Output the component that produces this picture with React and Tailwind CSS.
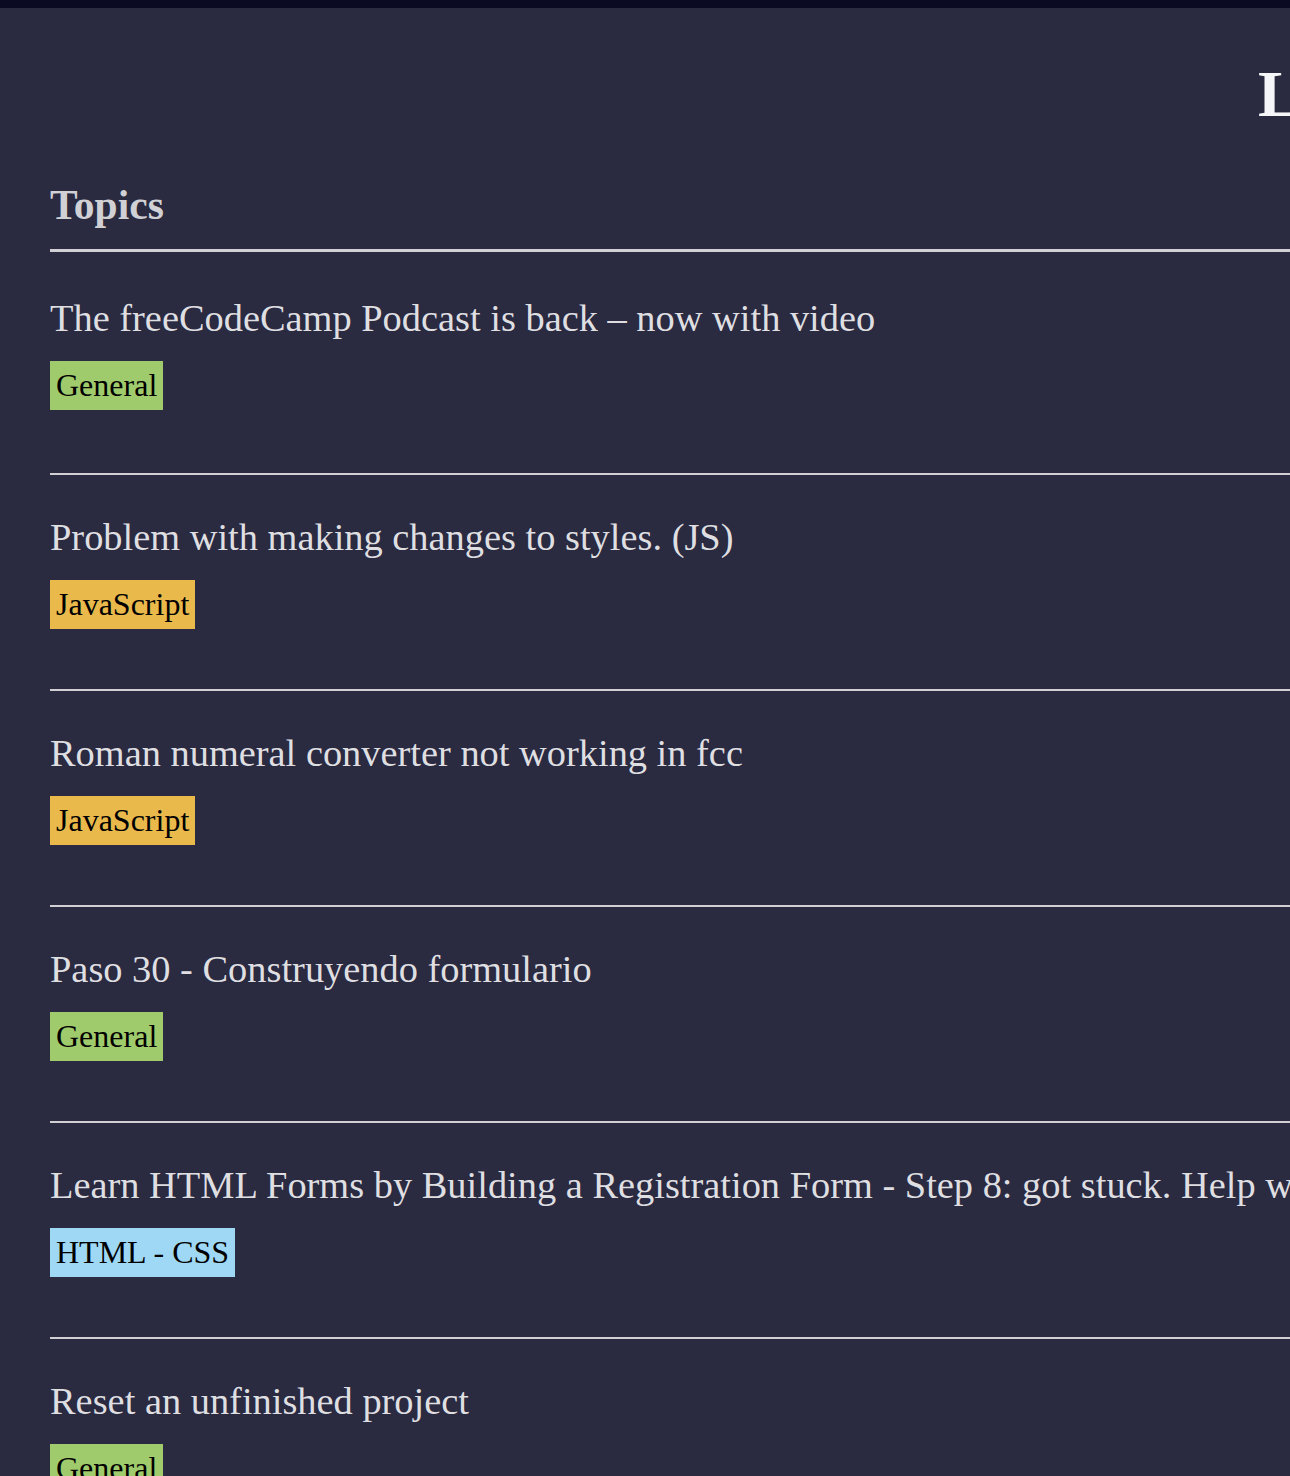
const topics = [
  { title: "The freeCodeCamp Podcast is back – now with video", tag: "General" },
  { title: "Problem with making changes to styles. (JS)", tag: "JavaScript" },
  { title: "Roman numeral converter not working in fcc", tag: "JavaScript" },
  { title: "Paso 30 - Construyendo formulario", tag: "General" },
  { title: "Learn HTML Forms by Building a Registration Form - Step 8: got stuck. Help with the input element", tag: "HTML - CSS" },
  { title: "Reset an unfinished project", tag: "General" },
];

const tagColors = {
  General: "bg-[#a0cb6c]",
  JavaScript: "bg-[#e9b94c]",
  "HTML - CSS": "bg-[#9fd8f5]",
};

export default function App() {
  return (
    <div className="min-h-screen w-full overflow-hidden bg-[#2a2a40] font-['Liberation_Serif',serif]">
      <div className="h-2 bg-[#0a0a23]" />

      <h1 className="mt-[54px] pl-[1258px] whitespace-nowrap text-[65px] font-bold leading-none text-[#f5f6f7]">
        Latest Topics
      </h1>

      <div className="ml-[50px] mt-[58px]">
        <div className="border-b-[3px] border-[#d0d0d5] pb-[22px] text-[41.5px] font-bold leading-none text-[#d0d0d5]">
          Topics
        </div>

        {topics.map((t, i) => (
          <div
            key={i}
            className={`border-b-2 border-[#d0d0d5] ${i === 0 ? "pt-[47px] pb-[63px]" : "pt-[43px] pb-[59.6px]"}`}
          >
            <p className="whitespace-nowrap text-[38.4px] leading-none text-[#dfdfe2]">{t.title}</p>
            <span className={`mt-[24px] inline-block px-[6px] text-[32px] leading-[49px] text-black ${tagColors[t.tag]}`}>
              {t.tag}
            </span>
          </div>
        ))}
      </div>
    </div>
  );
}
